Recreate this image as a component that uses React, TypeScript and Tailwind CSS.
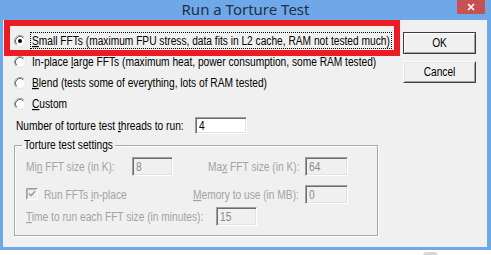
import type { ReactNode } from "react"

const TEXT = "font-['Liberation_Sans',Arial,sans-serif] text-[10.2px]"

// dialog text in the shot is tall and narrow, so stretch it vertically
function T({ children }: { children: ReactNode }) {
  return <span className="inline-block scale-y-[1.22] whitespace-nowrap">{children}</span>
}

function Radio({ checked = false }: { checked?: boolean }) {
  return (
    <svg width="12" height="12" viewBox="0 0 12 12" className="shrink-0">
      <circle cx="6" cy="6" r="5.5" fill="#fff" stroke="#e3e3e3" />
      <path d="M2.11 9.89A5.5 5.5 0 0 1 9.89 2.11" fill="none" stroke="#a0a0a0" />
      <path d="M2.82 9.18A4.5 4.5 0 0 1 9.18 2.82" fill="none" stroke="#696969" />
      {checked && <circle cx="6" cy="6" r="2" fill="#000" />}
    </svg>
  )
}

function RadioRow({ label, checked, focused }: { label: ReactNode; checked?: boolean; focused?: boolean }) {
  return (
    <div className="flex h-[17px] items-center pl-[11px]">
      <Radio checked={checked} />
      <span
        className={
          focused
            ? "ml-[4px] flex h-[17px] items-center border border-dotted border-black px-[1px]"
            : "ml-[4px] flex h-[17px] items-center border border-transparent px-[1px]"
        }
      >
        <T>{label}</T>
      </span>
    </div>
  )
}

function Field({ value, width, disabled = false }: { value: string; width: string; disabled?: boolean }) {
  return (
    <div
      className={
        (disabled ? "bg-[#f0f0f0] text-[#8c8c8c] " : "bg-white text-black ") +
        width +
        " flex h-full shrink-0 items-center border border-t-[#a0a0a0] border-l-[#a0a0a0] border-r-white border-b-white pl-[3px] shadow-[inset_1px_1px_0_#6d6d6d,inset_-1px_-1px_0_#e3e3e3]"
      }
    >
      <T>{value}</T>
    </div>
  )
}

function Button({ children, isDefault = false }: { children: ReactNode; isDefault?: boolean }) {
  return (
    <div
      className={
        isDefault
          ? "flex h-[22px] w-[73px] items-center justify-center border border-[#3c3c3c] bg-[#f0f0f0] shadow-[inset_1px_1px_0_#fff,inset_-1px_-1px_0_#a0a0a0]"
          : "flex h-[22px] w-[73px] items-center justify-center border border-t-white border-l-white border-r-[#404040] border-b-[#404040] bg-[#f0f0f0] shadow-[inset_1px_1px_0_#e3e3e3,inset_-1px_-1px_0_#a0a0a0]"
      }
    >
      <T>{children}</T>
    </div>
  )
}

export default function App() {
  return (
    <div className="flex h-[255px] w-[491px] flex-col overflow-hidden bg-white">
      {/* title bar */}
      <div className="relative flex h-[20px] shrink-0 justify-center bg-[#6ea8e8]">
        <span className="font-['Noto_Sans',sans-serif] text-[15px] leading-[18px] text-[#1f3048]">Run a Torture Test</span>
        <div className="absolute top-0 right-[6px] flex h-[14px] w-[28px] items-center justify-center bg-[#c75050]">
          <svg width="8" height="8" viewBox="0 0 8 8">
            <path d="M1 1L7 7M7 1L1 7" stroke="#fff" strokeWidth="1.7" />
          </svg>
        </div>
      </div>

      <div className="flex h-[227px] shrink-0">
        <div className="w-[3px] bg-[#6ea8e8]" />
        <div className={"relative flex w-[484px] flex-col bg-[#f0f0f0] text-black " + TEXT}>
          <div className="flex">
            <div className="flex w-[400px] flex-col gap-[4px] pt-[12px]">
              <RadioRow
                checked
                focused
                label={
                  <>
                    <u>S</u>mall FFTs (maximum FPU stress, data fits in L2 cache, RAM not tested much)
                  </>
                }
              />
              <RadioRow
                label={
                  <>
                    In-place <u>l</u>arge FFTs (maximum heat, power consumption, some RAM tested)
                  </>
                }
              />
              <RadioRow
                label={
                  <>
                    <u>B</u>lend (tests some of everything, lots of RAM tested)
                  </>
                }
              />
              <RadioRow
                label={
                  <>
                    <u>C</u>ustom
                  </>
                }
              />
            </div>
            <div className="flex flex-col gap-[7px] pt-[12px]">
              <Button isDefault>OK</Button>
              <Button>Cancel</Button>
            </div>
          </div>

          <div className="mt-[5px] flex h-[17px] items-center pl-[13px]">
            <span className="w-[179px]">
              <T>
                Number of torture test <u>t</u>hreads to run:
              </T>
            </span>
            <Field value="4" width="w-[52px]" />
          </div>

          <fieldset className="mt-[3px] ml-[11px] h-[99px] w-[364px] border border-[#a7a7a7] shadow-[inset_1px_1px_0_#fff,1px_1px_0_#fff]">
            <legend className="ml-[7px] px-[2px] leading-[16px]">
              <T>Torture test settings</T>
            </legend>
            <div className="flex flex-col pt-[4px] pl-[11px] text-[#a3a3a3]">
              <div className="flex h-[19px] items-center">
                <span className="w-[106px]">
                  <T>
                    Mi<u>n</u> FFT size (in K):
                  </T>
                </span>
                <Field value="8" width="w-[41px]" disabled />
                <span className="w-[35px]" />
                <span className="w-[97px]">
                  <T>
                    Ma<u>x</u> FFT size (in K):
                  </T>
                </span>
                <Field value="64" width="w-[43px]" disabled />
              </div>
              <div className="mt-[9px] flex h-[19px] items-center">
                <div className="flex w-[167px] items-center">
                  <svg width="12" height="12" viewBox="0 0 12 12" className="shrink-0">
                    <rect x="0.5" y="0.5" width="11" height="11" fill="#f0f0f0" stroke="#fff" />
                    <path d="M0.5 11.5V0.5H11.5" fill="none" stroke="#a0a0a0" />
                    <path d="M1.5 10.5V1.5H10.5" fill="none" stroke="#b8b8b8" />
                    <path d="M3 5.5L5 7.5L9.2 3.3" fill="none" stroke="#a0a0a0" strokeWidth="1.6" />
                  </svg>
                  <span className="ml-[6px]">
                    <T>
                      Run FFTs <u>i</u>n-place
                    </T>
                  </span>
                </div>
                <span className="w-[112px]">
                  <T>
                    <u>M</u>emory to use (in MB):
                  </T>
                </span>
                <Field value="0" width="w-[43px]" disabled />
              </div>
              <div className="mt-[3px] flex h-[19px] items-center">
                <span className="w-[190px]">
                  <T>
                    <u>T</u>ime to run each FFT size (in minutes):
                  </T>
                </span>
                <Field value="15" width="w-[41px]" disabled />
              </div>
            </div>
          </fieldset>

          {/* red annotation box drawn over the dialog */}
          <div className="pointer-events-none absolute top-0 left-[1px] h-[36px] w-[396px] border-[6px] border-[#ec1c24]" />
        </div>
        <div className="w-[4px] bg-[#6ea8e8]" />
      </div>

      <div className="h-[3px] shrink-0 bg-[#6ea8e8]" />
      <div className="flex h-[5px] shrink-0">
        <div className="mt-[2px] ml-[423px] h-[4px] w-[15px] rounded-t-full bg-[#d6d6d6]" />
      </div>
    </div>
  )
}
